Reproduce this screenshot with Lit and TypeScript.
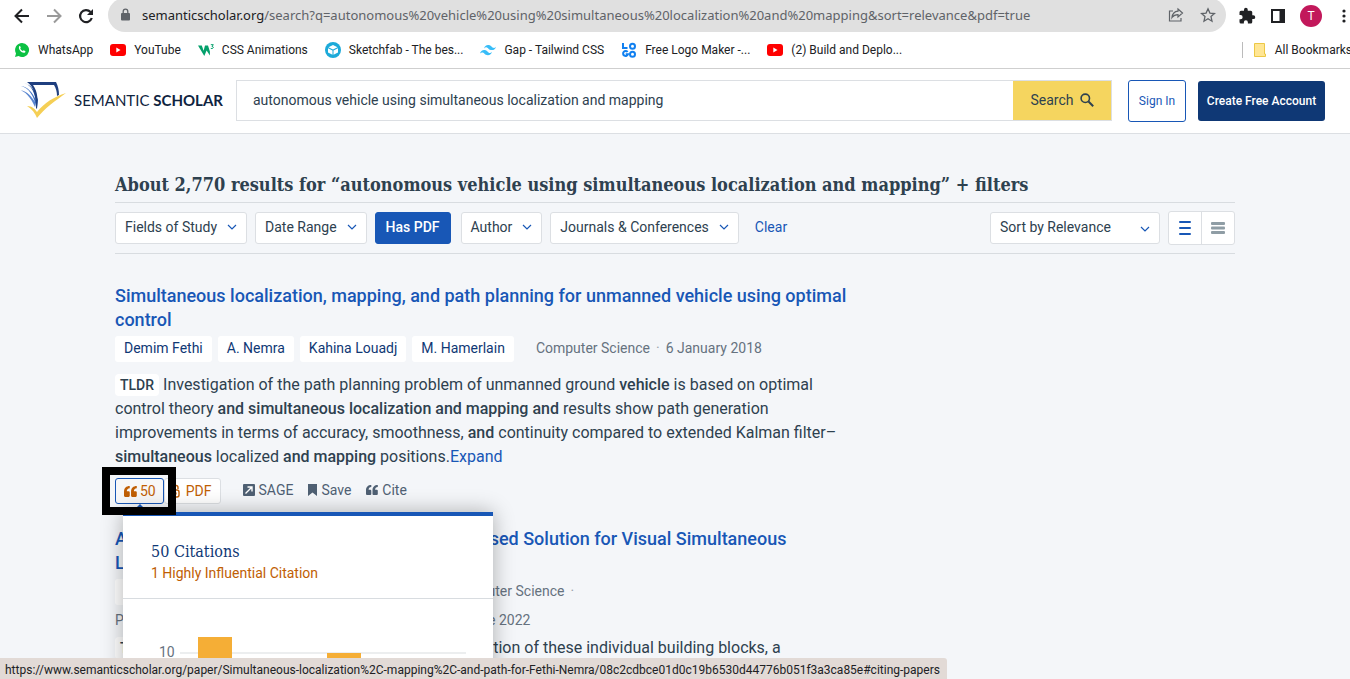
import { LitElement, html, css, svg } from "lit";
import { customElement } from "lit/decorators.js";

const chevron = html`<svg class="chev" viewBox="0 0 10 6" width="10" height="6"><path d="M1 1l4 4 4-4" fill="none" stroke="#1857b6" stroke-width="1.2"/></svg>`;
const youtube = html`<svg viewBox="0 0 16 16" width="16" height="16"><rect y="2" width="16" height="12" rx="3" fill="#f00"/><path d="M6.300 5.500v5L10.500 8z" fill="#fff"/></svg>`;
const quote = (c: string, w: number) => html`<svg viewBox="0 0 12 10" width=${w} height=${w - 2}>
  ${[0, 6.5].map((x) => svg`<path transform="translate(${x} 0)" d="M5.300 0C2 0 0 2 0 5.200V9a1 1 0 0 0 1 1h3.300a1 1 0 0 0 1-1V5.800a1 1 0 0 0-1-1H2.600C2.600 3.200 3.500 2.300 5.300 2.100z" fill=${c}/>`)}</svg>`;

const whatsapp = html`<svg viewBox="0 0 16 16" width="16" height="16"><path d="M8 1a7 7 0 0 0-6 10.500L1 15l3.600-.9A7 7 0 1 0 8 1z" fill="#0cc143"/><path d="M5.200 4.300c.5-.4.9-.3 1.100.2l.5 1.200-.6.9c.6 1.200 1.400 1.900 2.600 2.500l.8-.9 1.500.7c.5.3.3 1.100-.1 1.500-2.100 1.700-7.500-2.600-5.800-6.100z" fill="#fff"/></svg>`;
const w3 = html`<svg viewBox="0 0 16 16" width="16" height="16"><path d="M0 3.500h3.800l1.800 5.300L7 3.500h3l1.900 6V13.500L8.600 8.500 6.300 14z" fill="#04a06b"/><path d="M12.800 2.700h2.500L14 4.500c2.200 0 1.600 2.700-1.200 1.900" fill="none" stroke="#04a06b" stroke-width="1"/></svg>`;
const sketchfab = html`<svg viewBox="0 0 16 16" width="16" height="16"><circle cx="8" cy="8" r="8" fill="#1caad9"/><path d="M8 3l4.500 2.200L8 7.400 3.500 5.200zM3 6.200l4.500 2.300v4.300L3 10.500zM13 6.200L8.500 8.500v4.300l4.500-2.300z" fill="#fff"/></svg>`;
const tailwind = html`<svg viewBox="0 0 16 16" width="16" height="16"><path d="M4 6.500C4.600 4.200 6 3 8.100 3c3.200 0 3.500 2.400 5.100 2.800 1 .3 1.900-.1 2.800-1.100-.6 2.200-2 3.400-4.100 3.400-3.200 0-3.500-2.300-5.100-2.700-1-.3-1.900.1-2.800 1.100zM0 11.600c.6-2.300 2-3.500 4.100-3.500 3.200 0 3.500 2.400 5.100 2.800 1 .3 1.900-.1 2.800-1.100-.6 2.200-2 3.400-4.100 3.400-3.200 0-3.500-2.300-5.100-2.700-1-.3-1.900.1-2.800 1.100z" fill="#38bdf8"/></svg>`;
const logoMaker = html`<svg viewBox="0 0 16 16" width="16" height="16" fill="none" stroke="#1180f0" stroke-width="2"><path d="M2 1v5h4.500M6.600 10A2.500 2.500 0 1 0 7 12.300H4.700"/><circle cx="11.500" cy="4.300" r="2.500"/><circle cx="11.500" cy="12.200" r="2.500"/></svg>`;
const brand = html`<svg viewBox="0 0 50 38" width="50" height="38">
  <path d="M0 9c7 0 13 8 17 17v-5C12 13 7 9 0 9z" fill="#5a86d0"/>
  <path d="M3 5c8 2 13 10 15 21v-7C14 11 10 6 3 5z" fill="#3c6fc4"/>
  <path d="M6 2c8 2 11 10 13 24l1-7C17 9 13 4 6 2z" fill="#2350a0"/>
  <path d="M9 1h29c2 4 3 8 3 13l-2 1c0-4-1-8-3-11H15c5 7 5 15 4 24l-1-1C18 14 16 6 9 1z" fill="#1f3f7f"/>
  <path d="M9 25c5 0 8 3 10 6 8-10 17-15 29-19C37 20 27 27 19 37c-2-5-5-9-10-12z" fill="#f5cf55"/></svg>`;

@customElement("app-root")
export class AppRoot extends LitElement {
  static styles = css`
    :host { display: block; height: 100vh; overflow: hidden; background: #f4f6f9; color: #2e414f; font: 14px/20px Roboto, sans-serif; }
    * { box-sizing: border-box; }
    svg { flex: none; display: block; }
    a { color: inherit; text-decoration: none; }
    button, input, select { font: inherit; color: inherit; margin: 0; }
    button { white-space: nowrap; cursor: pointer; }
    .plain { border: 0; background: none; padding: 0; display: flex; }
    .chrome { background: #fff; border-bottom: 1px solid #cfcfcf; font-family: "Noto Sans", sans-serif; overflow: hidden; }
    .toolbar { display: flex; align-items: center; height: 32px; padding-left: 14px; gap: 16px; }
    .url { flex: 1; display: flex; align-items: center; min-width: 0; height: 34px; margin: -2px -4px 0 -2px; padding: 0 10px 0 13px; border-radius: 17px; background: #e0e0e0; gap: 16px; }
    .address { flex: 1; font-size: 13px; color: #5f6368; white-space: nowrap; overflow: hidden; margin-left: -5px; }
    .host { color: #202124; }
    .tools { display: flex; align-items: center; gap: 14px; margin-right: -2px; }
    .avatar { width: 22px; height: 22px; border-radius: 50%; background: #c2185b; color: #fff; font: 12px/22px Roboto, sans-serif; text-align: center; padding: 0; border: 0; }
    .bookmarks { display: flex; align-items: center; height: 36px; padding-left: 14px; gap: 17px; font: 12px/16px Roboto, sans-serif; color: #202124; white-space: nowrap; }
    .bookmarks a { display: flex; align-items: center; gap: 8px; }
    .all { margin-left: auto; border-left: 1px solid #bbb; padding-left: 10px; margin-right: -2px; }
    .header { display: flex; align-items: center; height: 65px; padding: 0 25px 0 18px; background: #fff; border-bottom: 1px solid #dcdfe3; }
    .brand { display: flex; align-items: center; gap: 6px; font: 15px/20px Lato, sans-serif; color: #0f2440; white-space: nowrap; width: 218px; padding-bottom: 2px; }
    .search { flex: 1; display: flex; height: 41px; margin: 0 16px 2px 0; border: 1px solid #dcdfe3; }
    .search input { flex: 1; min-width: 0; border: 0; padding: 0 16px; outline: 0; background: none; }
    .search button { width: 98px; border: 0; background: #f5d55f; display: flex; align-items: center; justify-content: center; gap: 6px; }
    .signin { width: 58px; height: 42px; border: 1px solid #1857b6; border-radius: 3px; background: #fff; color: #1857b6; font-size: 12px; padding: 0; margin-right: 12px; }
    .create { width: 127px; height: 40px; border: 0; border-radius: 3px; background: #0f3875; color: #fff; font-size: 12px; font-weight: 500; padding: 0; }
    .main { max-width: 1120px; margin: 0 auto; padding-top: 36px; }
    h1 { margin: 0; padding-bottom: 2px; font: 600 18px/30px "Roboto Slab", "DejaVu Serif Condensed", serif; border-bottom: 1px solid #d8dce0; white-space: nowrap; }
    .filters { display: flex; align-items: center; gap: 8px; height: 51px; border-bottom: 1px solid #d8dce0; }
    .filter { display: flex; align-items: center; gap: 10px; height: 32px; padding: 0 9px 2px; background: #fff; border: 1px solid #dcdfe3; border-radius: 3px; }
    .filter.on { background: #1857b6; border-color: #1857b6; color: #fff; font-weight: 500; margin-right: 2px; padding: 0 10px 2px; }
    .clear { color: #1857b6; margin-left: 8px; padding-bottom: 2px; }
    .sort { position: relative; margin-left: auto; }
    .sort select { appearance: none; display: block; width: 170px; height: 32px; padding: 0 9px 2px; background: #fff; border: 1px solid #dcdfe3; border-radius: 3px; }
    .sort .chev { position: absolute; right: 10px; top: 14px; pointer-events: none; }
    .views { display: flex; border: 1px solid #dcdfe3; border-radius: 3px; background: #fff; }
    .views button { width: 32px; height: 32px; border: 0; background: none; padding: 0; display: grid; place-items: center; }
    .views button + button { border-left: 1px solid #dcdfe3; width: 33px; }
    .result { max-width: 740px; }
    .first { padding-top: 30px; }
    .second { padding-top: 23px; }
    h2 { margin: 0; font: 500 18px/24px Roboto, sans-serif; color: #1857b6; }
    .meta { display: flex; flex-wrap: wrap; align-items: center; gap: 3px 6px; margin-top: 4px; color: #66727f; }
    .meta > * { padding-bottom: 2px; }
    .meta > .chip { padding: 2px 9px 4px; border-radius: 3px; background: #fff; color: #0f3875; }
    .field { margin-left: 16px; }
    .dot { color: #9aa3ac; }
    .venue { flex-basis: 100%; line-height: 24px; }
    .tldr { margin: 11px 0 0; font-size: 16px; line-height: 24px; }
    .second .tldr { margin-top: 2px; }
    .tldr b { font-weight: 500; }
    .badge { display: inline-block; margin-right: 4px; padding: 0 5px; border-radius: 4px; background: #fff; font-size: 14px; line-height: 22px; font-weight: 500; }
    .expand { color: #1857b6; }
    .actions { display: flex; align-items: center; margin-top: 9px; height: 26px; color: #4f6073; }
    .actions > a { display: flex; align-items: center; gap: 4px; margin-right: 15px; padding-bottom: 2px; }
    .cites { position: relative; }
    .pill { display: flex; align-items: center; gap: 3px; height: 26px; padding: 0 8px; border: 1px solid #dcdfe3; border-radius: 3px; background: #fff; color: #c05e04; }
    .cites .pill { border-color: #1857b6; background: #f7f7f8; padding-right: 7px; }
    .pdf { margin-right: 22px; gap: 6px; }
    .mark { position: absolute; inset: -11px -12px -11px -13px; border: 8px solid #000; z-index: 3; pointer-events: none; }
    .tip { position: absolute; left: 20px; top: 25px; z-index: 2; }
    .popup { position: absolute; left: 8px; top: 34px; width: 370px; z-index: 2; background: #fff; border-top: 4px solid #1857b6; box-shadow: 0 0 20px rgba(0,0,0,.3); }
    .summary { padding: 25px 28px 14px; border-bottom: 1px solid #d8dce0; }
    .summary h3 { margin: 0; font: 400 16px/22px "Roboto Slab", "DejaVu Serif Condensed", serif; color: #0f3875; }
    .summary p { margin: 0; line-height: 21px; color: #c05e04; }
    .chart text { font: 14px Roboto, sans-serif; fill: #66727f; }
    .status { position: fixed; left: 0; bottom: 0; z-index: 5; padding: 4px 7px 1px 5px; background: #e2dad6; color: #202124; font: 12px/16px Roboto, sans-serif; border-radius: 0 3px 0 0; white-space: nowrap; }
  `;

  render() {
    return html`
      <div class="chrome">
        <div class="toolbar">
          <button class="plain" aria-label="Back"><svg width="16" height="16" viewBox="0 0 16 16" fill="none" stroke="#202124" stroke-width="2"><path d="M15 8H2M8 1.500L1.500 8 8 14.500"/></svg></button>
          <button class="plain" aria-label="Forward"><svg width="16" height="16" viewBox="0 0 16 16" fill="none" stroke="#9a9a9a" stroke-width="2"><path d="M1 8h13M8 1.500L14.500 8 8 14.500"/></svg></button>
          <button class="plain" aria-label="Reload"><svg width="16" height="16" viewBox="0 0 16 16" fill="none"><path d="M12.500 4A6 6 0 1 0 13.800 10" stroke="#202124" stroke-width="2.200"/><path d="M15 1v6H9z" fill="#202124"/></svg></button>
          <div class="url">
            <svg width="10" height="14" viewBox="0 0 10 14"><rect y="5" width="9" height="7.500" rx="1" fill="#5f6368"/><path d="M2.200 5.500V3.500a2.300 2.300 0 0 1 4.600 0v2" fill="none" stroke="#5f6368" stroke-width="1.300"/></svg>
            <div class="address"><span class="host">semanticscholar.org</span>/search?q=autonomous%20vehicle%20using%20simultaneous%20localization%20and%20mapping&amp;sort=relevance&amp;pdf=true</div>
            <button class="plain" aria-label="Share"><svg width="16" height="16" viewBox="0 0 16 16" fill="none" stroke="#5f6368" stroke-width="1.200"><path d="M5 4H1.500v10H13v-3M10 2l4.500 4L10 10V7.700c-3 0-4.500.8-6 2.800.4-3.500 2.500-6 6-6.300z"/></svg></button>
            <button class="plain" aria-label="Bookmark"><svg width="16" height="16" viewBox="0 0 16 16" fill="none" stroke="#5f6368" stroke-width="1.300"><path d="M8 1.800l1.900 4.300 4.600.4L11 9.600l1 4.600-4-2.400-4 2.400 1-4.600-3.500-3.100 4.600-.4z"/></svg></button>
          </div>
          <div class="tools">
            <button class="plain" aria-label="Extensions"><svg width="18" height="18" viewBox="0 0 24 24" fill="#202124"><path d="M20.500 11H19V7a2 2 0 0 0-2-2h-4V3.500a2.500 2.500 0 0 0-5 0V5H4a2 2 0 0 0-2 2v3.800h1.500a2.700 2.700 0 0 1 0 5.400H2V20a2 2 0 0 0 2 2h3.800v-1.500a2.700 2.700 0 0 1 5.400 0V22H17a2 2 0 0 0 2-2v-4h1.500a2.500 2.500 0 0 0 0-5z"/></svg></button>
            <button class="plain" aria-label="Side panel"><svg width="16" height="16" viewBox="0 0 16 16"><path d="M1 1h14v14H1zM3 3v10h6.500V3z" fill="#202124" fill-rule="evenodd"/></svg></button>
            <button class="avatar">T</button>
            <button class="plain" aria-label="Menu"><svg width="16" height="16" viewBox="0 0 16 16" fill="#202124"><circle cx="8" cy="3" r="1.600"/><circle cx="8" cy="8" r="1.600"/><circle cx="8" cy="13" r="1.600"/></svg></button>
          </div>
        </div>
        <nav class="bookmarks">
          <a href="#">${whatsapp}WhatsApp</a><a href="#">${youtube}YouTube</a><a href="#">${w3}CSS Animations</a><a href="#">${sketchfab}Sketchfab - The bes...</a><a href="#">${tailwind}Gap - Tailwind CSS</a><a href="#">${logoMaker}Free Logo Maker -...</a><a href="#">${youtube}(2) Build and Deplo...</a>
          <a class="all" href="#"><svg width="14" height="16" viewBox="0 0 14 16"><path d="M1.500 1.500h10v10.500h1v2.500h-11z" fill="#ffe694" stroke="#ecc846"/></svg>All Bookmarks</a>
        </nav>
      </div>
      <header class="header">
        <a class="brand" href="#">${brand}<span>SEMANTIC <b>SCHOLAR</b></span></a>
        <form class="search">
          <input aria-label="Search papers" value="autonomous vehicle using simultaneous localization and mapping">
          <button type="button">Search <svg width="14" height="14" viewBox="0 0 14 14" fill="none" stroke="#2e414f"><circle cx="5.300" cy="5.300" r="4.200" stroke-width="1.600"/><path d="M8.500 8.500l4.700 4.700" stroke-width="2"/></svg></button>
        </form>
        <button class="signin">Sign In</button>
        <button class="create">Create Free Account</button>
      </header>
      <main class="main">
        <h1>About 2,770 results for “autonomous vehicle using simultaneous localization and mapping” + filters</h1>
        <div class="filters">
          <button class="filter">Fields of Study ${chevron}</button>
          <button class="filter">Date Range ${chevron}</button>
          <button class="filter on">Has PDF</button>
          <button class="filter">Author ${chevron}</button>
          <button class="filter">Journals &amp; Conferences ${chevron}</button>
          <button class="plain clear">Clear</button>
          <div class="sort"><select aria-label="Sort results"><option>Sort by Relevance</option></select>${chevron}</div>
          <div class="views">
            <button aria-label="Detailed view"><svg width="12" height="16" viewBox="0 0 12 16" fill="#1857b6"><rect y="1" width="12" height="2" rx="1"/><rect y="7" width="12" height="2" rx="1"/><rect y="13" width="12" height="2" rx="1"/></svg></button>
            <button aria-label="Compact view"><svg width="14" height="16" viewBox="0 0 14 16" fill="#8f9da5"><rect y="2" width="14" height="3" rx="1"/><rect y="6.500" width="14" height="3" rx="1"/><rect y="11" width="14" height="3" rx="1"/></svg></button>
          </div>
        </div>
        <article class="result first">
          <h2><a href="#">Simultaneous localization, mapping, and path planning for unmanned vehicle using optimal control</a></h2>
          <div class="meta">
            <a class="chip" href="#">Demim Fethi</a><a class="chip" href="#">A. Nemra</a><a class="chip" href="#">Kahina Louadj</a><a class="chip" href="#">M. Hamerlain</a>
            <span class="field">Computer Science</span><span class="dot">·</span><span>6 January 2018</span>
          </div>
          <p class="tldr"><span class="badge">TLDR</span>Investigation of the path planning problem of unmanned ground <b>vehicle</b> is based on optimal control theory <b>and simultaneous localization and mapping and</b> results show path generation improvements in terms of accuracy, smoothness, <b>and</b> continuity compared to extended Kalman filter–<b>simultaneous</b> localized <b>and mapping</b> positions.<a class="expand" href="#">Expand</a></p>
          <div class="actions">
            <div class="cites">
              <button class="pill">${quote("#c05e04", 13)}50</button>
              <svg class="tip" width="10" height="9" viewBox="0 0 10 9"><path d="M5 1l5 5v3H0V6z" fill="#1857b6"/></svg>
              <section class="popup">
                <div class="summary"><h3>50 Citations</h3><p>1 Highly Influential Citation</p></div>
                <svg class="chart" width="370" height="130" viewBox="0 0 370 130">
                  <path d="M57 54h286" stroke="#eceeef" stroke-width="2"/>
                  <text x="36" y="58">10</text>
                  <rect x="75" y="38" width="34" height="92" fill="#f5ae36"/>
                  <rect x="204" y="54" width="34" height="76" fill="#f5ae36"/>
                </svg>
              </section>
              <div class="mark"></div>
            </div>
            <button class="pill pdf"><svg width="7" height="14" viewBox="0 0 7 14" fill="none" stroke="#c05e04" stroke-width="1.400"><path d="M1 5V3.500a2 2 0 0 1 4 0V5"/><rect x="-3" y="6" width="9" height="7" rx="2"/><circle cx="2" cy="9.500" r="1"/></svg>PDF</button>
            <a href="#"><svg width="12" height="12" viewBox="0 0 12 12"><rect width="12" height="12" rx="1" fill="#4f6073"/><path d="M2.500 9.500l6-6M4.500 3h4.500v4.500" fill="none" stroke="#fff" stroke-width="1.400"/></svg>SAGE</a>
            <a href="#"><svg width="9" height="12" viewBox="0 0 9 12"><path d="M0 0h9v12L4.500 8.500 0 12z" fill="#4f6073"/></svg>Save</a>
            <a href="#">${quote("#4f6073", 12)}Cite</a>
          </div>
        </article>
        <article class="result second">
          <h2><a href="#">An Accurate Monocular and Stereo Camera-Based Solution for Visual Simultaneous Localization and Mapping</a></h2>
          <div class="meta">
            <a class="chip" href="#">Ali Rida Sahili</a><a class="chip" href="#">Saifeldin Hassan</a><a class="chip" href="#">S. Sakreh</a><span class="field">Computer Science</span><span class="dot">·</span>
            <span class="venue">Published in International Conference on Robotic and AI June 2022</span>
          </div>
          <p class="tldr"><span class="badge">TLDR</span>This article introduces a survey and a combination of these individual building blocks, a</p>
        </article>
      </main>
      <div class="status">https://www.semanticscholar.org/paper/Simultaneous-localization%2C-mapping%2C-and-path-for-Fethi-Nemra/08c2cdbce01d0c19b6530d44776b051f3a3ca85e#citing-papers</div>
    `;
  }
}
